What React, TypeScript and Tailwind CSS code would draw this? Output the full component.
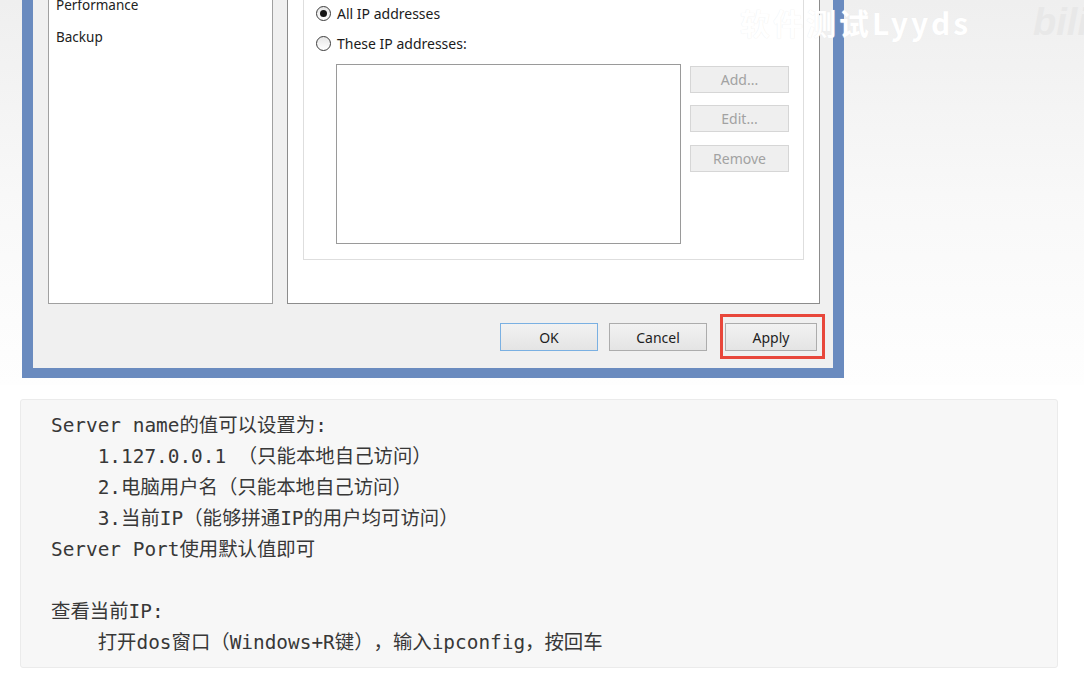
import React from 'react';

const CODE_LINES = [
  'Server name的值可以设置为:',
  '    1.127.0.0.1 （只能本地自己访问）',
  '    2.电脑用户名（只能本地自己访问）',
  '    3.当前IP（能够拼通IP的用户均可访问）',
  'Server Port使用默认值即可',
  '',
  '查看当前IP:',
  '    打开dos窗口（Windows+R键），输入ipconfig，按回车',
];

const ui = { fontFamily: '"Noto Sans", "Open Sans", sans-serif' };

function Radio({ checked, label, className }: { checked?: boolean; label: string; className?: string }) {
  return (
    <div className={`flex h-[20px] items-center ${className ?? ''}`}>
      <span className="ml-[12px] flex h-[15px] w-[15px] items-center justify-center rounded-full border border-[#3c3c3c] bg-gradient-to-b from-[#e6e6e6] to-white">
        {checked && <span className="h-[7px] w-[7px] rounded-full bg-[#151515]" />}
      </span>
      <span className="ml-[6px] text-[14px] text-[#1b1b1b]">{label}</span>
    </div>
  );
}

function SideButton({ label, className }: { label: string; className?: string }) {
  return (
    <div
      className={`flex h-[27px] w-[99px] items-center justify-center border border-[#d6d6d6] bg-[#efefef] text-[14px] text-[#a2a2a2] ${className ?? ''}`}
    >
      {label}
    </div>
  );
}

function DialogButton({ label, primary, width }: { label: string; primary?: boolean; width: string }) {
  return (
    <div
      className={`flex h-[28px] items-center justify-center border bg-gradient-to-b from-[#f2f2f2] to-[#e4e4e4] text-[14px] text-[#1e1e1e] ${width} ${
        primary ? 'border-[#7ab0e2]' : 'border-[#acacac]'
      }`}
    >
      {label}
    </div>
  );
}

function Dialog() {
  return (
    <div
      className="ml-[22px] flex h-[378px] w-[822px] flex-col border-x-[11px] border-b-[10px] border-[#6a8bbf] bg-[#f0f0f0]"
      style={ui}
    >
      <div className="flex h-[304px] gap-[14px] pl-[15px] pr-[13px]">
        <div className="w-[225px] overflow-hidden border-x border-b border-[#a0a0a0] bg-white pl-[7px]">
          <div className="-mt-[11px]">
            <div className="flex h-[32px] items-center text-[13.5px] text-[#222]">Performance</div>
            <div className="flex h-[32px] items-center text-[13.5px] text-[#222]">Backup</div>
          </div>
        </div>
        <div className="w-[533px] border-x border-b border-[#8c8c8c] bg-white px-[15px]">
          <div className="h-[260px] border-x border-b border-[#dedede] pt-[3px]">
            <Radio checked label="All IP addresses" />
            <Radio label="These IP addresses:" className="mt-[10px]" />
            <div className="mt-[11px] flex">
              <div className="ml-[32px] h-[180px] w-[345px] border border-[#9a9a9a] bg-white" />
              <div className="ml-[9px] mt-[2px] flex flex-col">
                <SideButton label="Add..." />
                <SideButton label="Edit..." className="mt-[12px]" />
                <SideButton label="Remove" className="mt-[13px]" />
              </div>
            </div>
          </div>
        </div>
      </div>
      <div className="mt-[19px] flex justify-end pr-[16px]">
        <DialogButton label="OK" primary width="w-[98px]" />
        <div className="ml-[11px]">
          <DialogButton label="Cancel" width="w-[98px]" />
        </div>
        <div className="relative ml-[18px]">
          <DialogButton label="Apply" width="w-[92px]" />
          <div className="absolute -bottom-[8px] -left-[5px] -right-[8px] -top-[9px] border-[3px] border-[#e8473b]" />
        </div>
      </div>
    </div>
  );
}

export default function App() {
  return (
    <div className="h-[673px] w-[1084px] overflow-hidden bg-white">
      <div className="relative h-[385px] bg-linear-to-b from-[#efefef] via-[#f8f8f8] to-[#fefefe]">
        <Dialog />
        <div className="absolute left-[740px] top-[-6px] flex items-center whitespace-nowrap">
          <span
            className="text-[30px] font-bold tracking-[3px] text-white"
            style={{ fontFamily: '"Noto Sans CJK SC", sans-serif', textShadow: '0 0 1px #e9e9e9' }}
          >
            软件测试Lyyds
          </span>
          <span
            className="ml-[62px] text-[38px] font-bold italic text-[#e8e8e8]"
            style={{ fontFamily: '"Liberation Sans", sans-serif' }}
          >
            bili
          </span>
        </div>
      </div>
      <div
        className="ml-[20px] mt-[14px] h-[269px] w-[1038px] rounded-[3px] border border-[#ebebeb] bg-[#f7f7f7] pl-[30px] pt-[10px] text-[19.4px] text-[#383838] [text-spacing-trim:space-all]"
        style={{ fontFamily: '"DejaVu Sans Mono", "Noto Sans CJK SC", monospace' }}
      >
        {CODE_LINES.map((line, i) => (
          <div key={i} className="h-[31px] whitespace-pre leading-[31px]">
            {line}
          </div>
        ))}
      </div>
    </div>
  );
}
